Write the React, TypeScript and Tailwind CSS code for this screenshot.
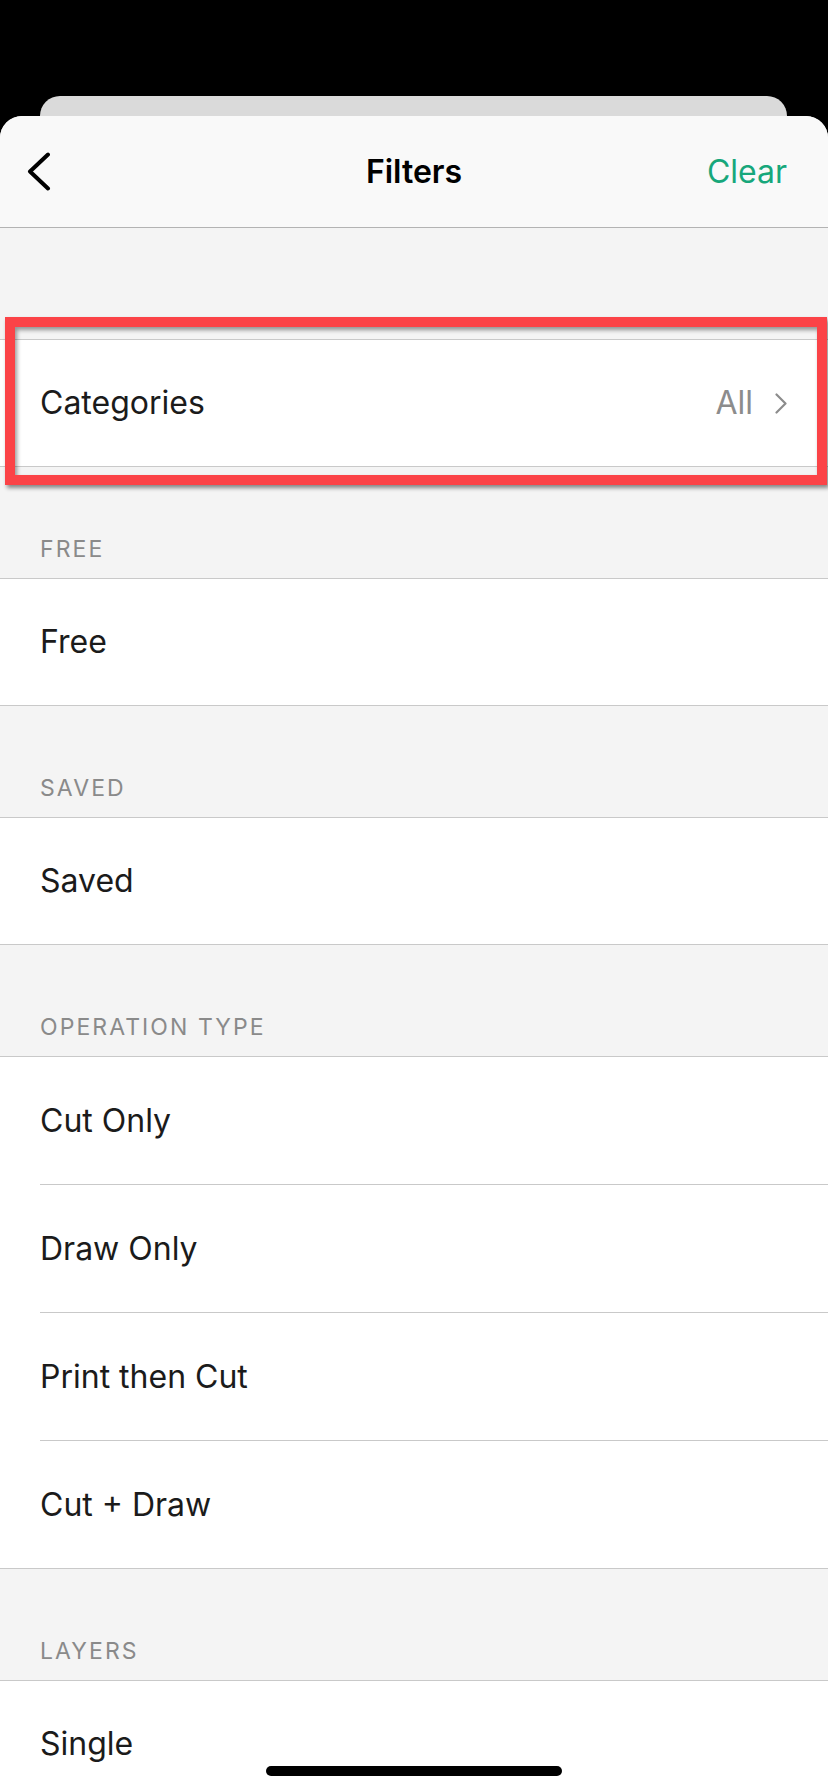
import React from 'react';

interface RowProps {
  label: string;
  inset?: boolean;
  value?: string;
  tall?: boolean;
}

function Row({ label, inset, value, tall }: RowProps) {
  if (inset) {
    return (
      <div className="bg-white pl-[40px]">
        <div className="h-[128px] flex items-center border-b border-[#c9c9c9] text-[32px] text-[#1b1b1b]">
          {label}
        </div>
      </div>
    );
  }
  return (
    <div
      className={
        (tall ? 'h-[128px] ' : 'h-[127px] ') +
        'bg-white pl-[40px] pr-[41px] flex items-center justify-between border-b border-[#c9c9c9] text-[32px] text-[#1b1b1b]'
      }
    >
      <span>{label}</span>
      {value && (
        <span className="flex items-center gap-[22px] text-[#8c8c8c]">
          {value}
          <svg width="12" height="21" viewBox="0 0 12 21" fill="none">
            <path d="M1.5 1.5 L10.5 10.5 L1.5 19.5" stroke="#8c8c8c" strokeWidth="2.2" strokeLinecap="round" strokeLinejoin="round" />
          </svg>
        </span>
      )}
    </div>
  );
}

function SectionHeader({ title }: { title: string }) {
  return (
    <div className="h-[112px] flex items-end pl-[40px] pb-[15px] border-b border-[#c9c9c9]">
      <span className="text-[23px] leading-[28px] tracking-[0.09em] uppercase text-[#8a8a8a]">{title}</span>
    </div>
  );
}

export default function App() {
  return (
    <div className="relative min-h-screen h-[1792px] overflow-hidden bg-black font-['Inter','Noto_Sans',sans-serif]">
      <div className="pt-[96px]">
        <div className="ml-[40px] mr-[41px] h-[20px] rounded-t-[20px] bg-[#dadada]" />
        <div className="rounded-t-[22px] overflow-hidden bg-[#f4f4f4] h-[1676px]">
          {/* Header */}
          <div className="h-[112px] grid grid-cols-[1fr_auto_1fr] items-center bg-[#f9f9f9] border-b border-[#b3b3b3]">
            <div className="pl-[27px] flex items-center">
              <svg width="24" height="39" viewBox="0 0 24 39" fill="none">
                <path d="M21 2.5 L3 19.5 L21 36.5" stroke="#000" strokeWidth="4" strokeLinecap="round" strokeLinejoin="round" />
              </svg>
            </div>
            <h1 className="text-[32px] font-semibold text-black">Filters</h1>
            <div className="flex justify-end pr-[41px]">
              <span className="text-[32px] text-[#17a77b]">Clear</span>
            </div>
          </div>

          <div className="h-[112px] border-b border-[#c9c9c9]" />
          <Row label="Categories" value="All" />

          <SectionHeader title="Free" />
          <Row label="Free" />

          <SectionHeader title="Saved" />
          <Row label="Saved" />

          <SectionHeader title="Operation Type" />
          <Row label="Cut Only" inset />
          <Row label="Draw Only" inset />
          <Row label="Print then Cut" inset />
          <Row label="Cut + Draw" tall />

          <SectionHeader title="Layers" />
          <Row label="Single" />
        </div>
      </div>

      {/* highlight overlay */}
      <div className="absolute left-[5px] top-[317px] w-[822px] h-[168px] border-[10px] border-[#fb4347] shadow-[2px_3px_4px_rgba(0,0,0,0.45),inset_2px_3px_4px_rgba(0,0,0,0.4)] pointer-events-none" />

      {/* home indicator */}
      <div className="absolute left-[266px] top-[1766px] w-[296px] h-[10px] rounded-full bg-black" />
    </div>
  );
}
